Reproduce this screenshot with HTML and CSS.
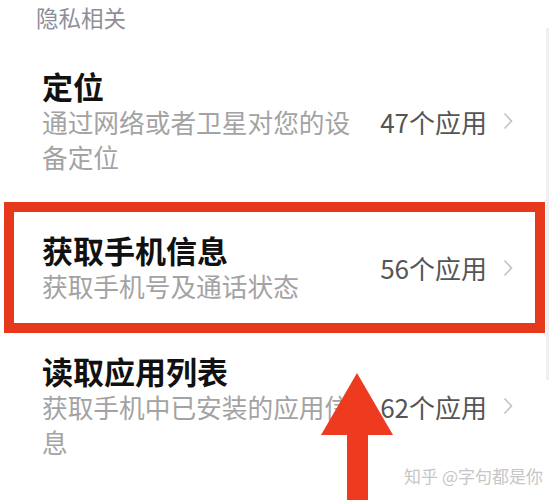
FILE: index.html
```html
<!DOCTYPE html>
<html lang="zh-CN">
<head>
    <meta charset="UTF-8">
    <meta name="viewport" content="width=device-width, initial-scale=1.0">
    <title>隐私相关</title>
    <link rel="stylesheet" href="styles.css">
</head>
<body>
    <div class="screen">
        <div class="section-title">隐私相关</div>

        <ul class="perm-list">
            <li class="perm-row">
                <div class="perm-text">
                    <div class="perm-name">定位</div>
                    <div class="perm-desc">通过网络或者卫星对您的设备定位</div>
                </div>
                <div class="perm-count">
                    <span>47个应用</span>
                    <svg class="chevron" viewBox="0 0 10 18"><polyline points="1.5,1.5 8.5,9 1.5,16.5"/></svg>
                </div>
            </li>

            <li class="perm-row marked">
                <div class="perm-text">
                    <div class="perm-name">获取手机信息</div>
                    <div class="perm-desc">获取手机号及通话状态</div>
                </div>
                <div class="perm-count">
                    <span>56个应用</span>
                    <svg class="chevron" viewBox="0 0 10 18"><polyline points="1.5,1.5 8.5,9 1.5,16.5"/></svg>
                </div>
            </li>

            <li class="perm-row">
                <div class="perm-text">
                    <div class="perm-name">读取应用列表</div>
                    <div class="perm-desc">获取手机中已安装的应用信息</div>
                </div>
                <div class="perm-count">
                    <span>62个应用</span>
                    <svg class="chevron" viewBox="0 0 10 18"><polyline points="1.5,1.5 8.5,9 1.5,16.5"/></svg>
                </div>
            </li>
        </ul>

        <!-- pointer arrow drawn over the list -->
        <svg class="arrow" viewBox="0 0 76 130">
            <polygon points="37,2 73,64 48,64 48,130 27,130 27,64 1,64"/>
        </svg>

        <div class="watermark">知乎 @字句都是你</div>
    </div>
</body>
</html>
```

FILE: styles.css
```css
body {
    margin: 0;
    background-color: #fff;
    font-family: "Noto Sans CJK SC", "Noto Sans", sans-serif;
}
.screen {
    position: relative;
    width: 555px;
    height: 500px;
    overflow: hidden;
    background-color: #fff;
}
.screen::after {
    /* faint edge of the card on the right */
    content: "";
    position: absolute;
    right: 6px;
    top: 28px;
    width: 3px;
    height: 352px;
    background-color: #efeff1;
}
.section-title {
    padding: 4px 0 0 36px;
    font-size: 22.5px;
    line-height: 26px;
    color: #8e8e9a;
}
.perm-list {
    list-style: none;
    margin: 18px 0 0;
    padding: 0;
}
.perm-row {
    display: flex;
    align-items: center;
    padding: 20px 42px 20px 42px;
}
.perm-row.marked {
    margin: 8px 10px 0 4px;
    padding: 20px 22px 20px 28px;
    border: 10px solid #e6381d;
}
.perm-text {
    flex: 1;
    min-width: 0;
}
.perm-name {
    font-size: 31px;
    line-height: 36px;
    font-weight: bold;
    color: #111;
}
.perm-desc {
    max-width: 316px;
    font-size: 25.7px;
    line-height: 35px;
    color: #a3a3a3;
}
.perm-count {
    display: flex;
    align-items: center;
    margin-left: 16px;
    font-size: 26px;
    color: #555;
}
.chevron {
    width: 10px;
    height: 18px;
    margin-left: 16px;
    fill: none;
    stroke: #c2c2c2;
    stroke-width: 1.6;
}
.arrow {
    position: absolute;
    left: 320px;
    top: 371px;
    width: 76px;
    height: 130px;
    fill: #ee3a1f;
}
.watermark {
    position: absolute;
    right: 12px;
    top: 464px;
    font-size: 17px;
    line-height: 24px;
    color: #c6c6c6;
}
```
